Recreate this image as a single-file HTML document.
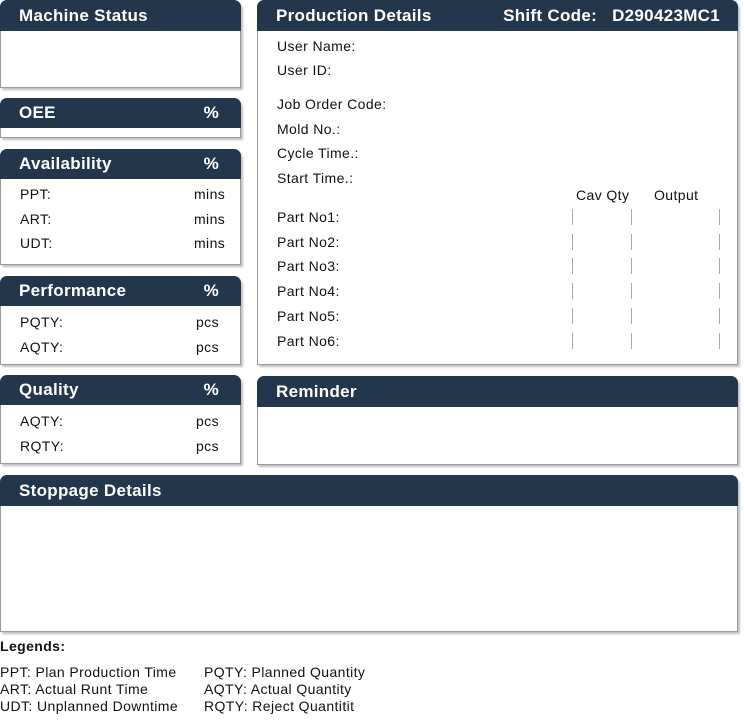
<!DOCTYPE html>
<html><head><meta charset="utf-8"><style>
*{box-sizing:border-box;margin:0;padding:0}
body{width:744px;height:720px;background:#fff;font-family:"Liberation Sans",sans-serif;color:#111;position:relative;overflow:hidden}
.c{position:absolute;border:1px solid #9a9a9a;border-radius:8px 8px 0 0;background:#fff;box-shadow:2px 2px 2px rgba(0,0,0,.25)}
.h{background:#22374b;color:#fff;font-weight:bold;font-size:17px;letter-spacing:0.3px;height:31px;line-height:31px;padding-left:19px;border-radius:7px 7px 0 0;position:relative;margin:-1px -1px 0 -1px}
.h .p{position:absolute;right:22px;top:0}
.t{position:absolute;font-size:14px;line-height:16px;white-space:nowrap;letter-spacing:0.4px}
.bar{position:absolute;width:1px;height:16px;background:#aaa}
</style></head><body>
<div class="c" style="left:0;top:0;width:241px;height:88px"><div class="h">Machine Status</div></div>
<div class="c" style="left:0;top:98px;width:241px;height:40px"><div class="h" style="height:30px;line-height:30px">OEE<span class="p">%</span></div></div>
<div class="c" style="left:0;top:149px;width:241px;height:116px"><div class="h" style="height:30px;line-height:30px">Availability<span class="p">%</span></div></div>
<div class="c" style="left:0;top:276px;width:241px;height:89px"><div class="h" style="height:30px;line-height:30px">Performance<span class="p">%</span></div></div>
<div class="c" style="left:0;top:375px;width:241px;height:89px"><div class="h" style="height:30px;line-height:30px">Quality<span class="p">%</span></div></div>
<div class="c" style="left:257px;top:0;width:481px;height:365px"><div class="h">Production Details<span class="p" style="right:18px">Shift Code:&nbsp;&nbsp;&nbsp;D290423MC1</span></div></div>
<div class="c" style="left:257px;top:376px;width:481px;height:89px"><div class="h">Reminder</div></div>
<div class="c" style="left:0;top:475px;width:738px;height:157px"><div class="h">Stoppage Details</div></div>

<div class="t" style="left:20px;top:186px">PPT:</div><div class="t" style="left:194px;top:186px">mins</div>
<div class="t" style="left:20px;top:211px">ART:</div><div class="t" style="left:194px;top:211px">mins</div>
<div class="t" style="left:20px;top:235px">UDT:</div><div class="t" style="left:194px;top:235px">mins</div>
<div class="t" style="left:20px;top:314px">PQTY:</div><div class="t" style="left:196px;top:314px">pcs</div>
<div class="t" style="left:20px;top:339px">AQTY:</div><div class="t" style="left:196px;top:339px">pcs</div>
<div class="t" style="left:20px;top:413px">AQTY:</div><div class="t" style="left:196px;top:413px">pcs</div>
<div class="t" style="left:20px;top:438px">RQTY:</div><div class="t" style="left:196px;top:438px">pcs</div>

<div class="t" style="left:277px;top:38px">User Name:</div>
<div class="t" style="left:277px;top:62px">User ID:</div>
<div class="t" style="left:277px;top:96px">Job Order Code:</div>
<div class="t" style="left:277px;top:121px">Mold No.:</div>
<div class="t" style="left:277px;top:145px">Cycle Time.:</div>
<div class="t" style="left:277px;top:170px">Start Time.:</div>
<div class="t" style="left:576px;top:187px">Cav Qty</div>
<div class="t" style="left:654px;top:187px">Output</div>
<div class="t" style="left:277px;top:209px">Part No1:</div>
<div class="t" style="left:277px;top:234px">Part No2:</div>
<div class="t" style="left:277px;top:258px">Part No3:</div>
<div class="t" style="left:277px;top:283px">Part No4:</div>
<div class="t" style="left:277px;top:308px">Part No5:</div>
<div class="t" style="left:277px;top:333px">Part No6:</div>

<div class="bar" style="left:572px;top:209px"></div><div class="bar" style="left:631px;top:209px"></div><div class="bar" style="left:719px;top:209px"></div>
<div class="bar" style="left:572px;top:234px"></div><div class="bar" style="left:631px;top:234px"></div><div class="bar" style="left:719px;top:234px"></div>
<div class="bar" style="left:572px;top:258px"></div><div class="bar" style="left:631px;top:258px"></div><div class="bar" style="left:719px;top:258px"></div>
<div class="bar" style="left:572px;top:283px"></div><div class="bar" style="left:631px;top:283px"></div><div class="bar" style="left:719px;top:283px"></div>
<div class="bar" style="left:572px;top:308px"></div><div class="bar" style="left:631px;top:308px"></div><div class="bar" style="left:719px;top:308px"></div>
<div class="bar" style="left:572px;top:333px"></div><div class="bar" style="left:631px;top:333px"></div><div class="bar" style="left:719px;top:333px"></div>

<div class="t" style="left:0;top:638px;font-weight:bold">Legends:</div>
<div class="t" style="left:0;top:664px">PPT: Plan Production Time</div>
<div class="t" style="left:0;top:681px">ART: Actual Runt Time</div>
<div class="t" style="left:0;top:698px">UDT: Unplanned Downtime</div>
<div class="t" style="left:204px;top:664px">PQTY: Planned Quantity</div>
<div class="t" style="left:204px;top:681px">AQTY: Actual Quantity</div>
<div class="t" style="left:204px;top:698px">RQTY: Reject Quantitit</div>
</body></html>
